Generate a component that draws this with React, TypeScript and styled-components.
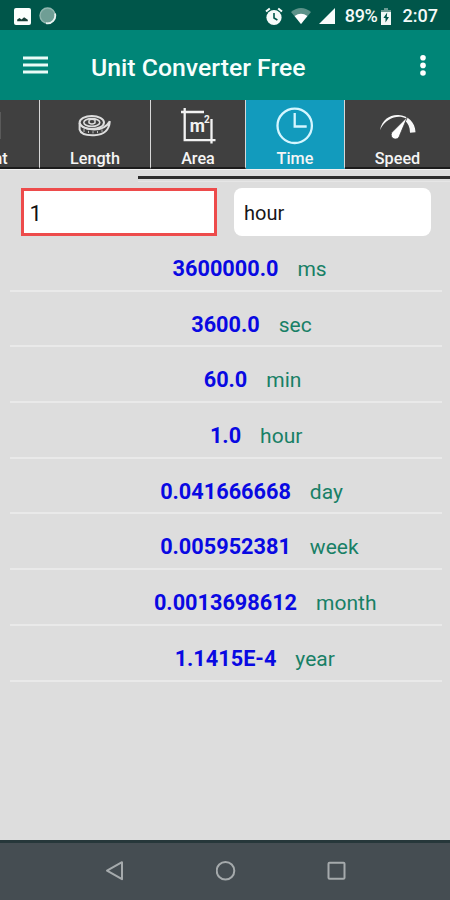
import React from "react";
import styled, { createGlobalStyle } from "styled-components";

const Global = createGlobalStyle`
  * { box-sizing: border-box; }
  body { margin: 0; background: #dddddd; font-family: Roboto, "Liberation Sans", sans-serif; }
`;

const Screen = styled.div`
  width: 450px;
  height: 900px;
  display: flex;
  flex-direction: column;
  overflow: hidden;
  background: #dddddd;
`;

const StatusBar = styled.header`
  height: 30px;
  flex: none;
  display: flex;
  align-items: center;
  padding: 2px 12px 0 14px;
  background: #00564a;
  color: #f4faf8;
  font-size: 18px;
  font-weight: 500;
  line-height: 28px;
  svg { display: block; flex: none; }
`;

const StatusGroup = styled.div<{ $push?: boolean }>`
  display: flex;
  align-items: center;
  gap: 8px;
  margin-left: ${(p) => (p.$push ? "auto" : "0")};
`;

const Battery = styled.span`
  display: flex;
  align-items: center;
  gap: 3px;
  margin: 0 4px 0 2px;
  letter-spacing: -0.3px;
`;

const AppBar = styled.div`
  height: 70px;
  flex: none;
  display: flex;
  align-items: center;
  padding: 0 24px 0 23px;
  background: #008577;
  svg { display: block; }
`;

const Title = styled.h1`
  margin: 5px auto 0 43px;
  font-size: 24.8px;
  font-weight: 500;
  line-height: 32px;
  color: #f7fffd;
  white-space: nowrap;
`;

const Tabs = styled.nav`
  height: 70px;
  flex: none;
  display: grid;
  grid-template-columns: 40px 111px 95px 99px 105px;
  border-bottom: 1px solid #f0f0f0;
`;

const Tab = styled.div<{ $active?: boolean }>`
  display: flex;
  flex-direction: column;
  align-items: center;
  justify-content: flex-end;
  overflow: hidden;
  background: ${(p) => (p.$active ? "#129bbd" : "#404040")};
  border-right: 1px solid #d8d8d8;
  border-bottom: 2px solid ${(p) => (p.$active ? "#129bbd" : "#1c1c1c")};
  color: #f5f5f5;
  &:last-child { border-right: 0; }
  svg { display: block; flex: none; }
`;

const TabLabel = styled.span<{ $clipped?: boolean }>`
  font-size: 16.2px;
  font-weight: 500;
  line-height: 20px;
  margin-bottom: -2px;
  padding-top: 2px;
  margin-left: ${(p) => (p.$clipped ? "-74px" : "0")};
`;

const ScrollTrack = styled.div`
  height: 18px;
  flex: none;
  padding: 6px 0 0 138px;
`;

const ScrollThumb = styled.div`
  height: 6px;
  border-top: 3px solid #2d2d2d;
  border-bottom: 1px solid #e6e6e6;
`;

const Fields = styled.div`
  flex: none;
  display: grid;
  grid-template-columns: 196px 197px;
  gap: 17.5px;
  height: 48px;
  padding-left: 20.5px;
`;

const AmountInput = styled.input`
  width: 100%;
  height: 48px;
  border: 3px solid #ed4b4b;
  border-radius: 0;
  outline: 0;
  padding: 2px 6px 0;
  background: #ffffff;
  color: #111111;
  font: 400 22px/40px Roboto, sans-serif;
`;

const UnitSelect = styled.div`
  border-radius: 8px;
  background: #ffffff;
  padding: 2px 10px 0;
  color: #171717;
  font-size: 20px;
  line-height: 46px;
`;

const Results = styled.main`
  flex: 1;
  padding: 0 8px 0 10px;
`;

const ResultRow = styled.div`
  height: 55.7px;
  display: grid;
  grid-template-columns: 1fr auto 1fr;
  align-items: center;
  column-gap: 19px;
  padding: 12px 1px 0 0;
  border-bottom: 2px solid #e9e9e9;
`;

const Value = styled.span`
  grid-column: 2;
  font-size: 21.7px;
  font-weight: 700;
  line-height: 30px;
  color: #0909e2;
`;

const Unit = styled.span`
  font-size: 21px;
  line-height: 30px;
  color: #188066;
`;

const NavBar = styled.footer`
  height: 60px;
  flex: none;
  display: flex;
  align-items: center;
  justify-content: space-between;
  padding: 0 103px 2px 104px;
  border-top: 3px solid #26373a;
  background: #454d52;
  svg { display: block; }
`;

const results = [
  ["3600000.0", "ms"],
  ["3600.0", "sec"],
  ["60.0", "min"],
  ["1.0", "hour"],
  ["0.041666668", "day"],
  ["0.005952381", "week"],
  ["0.0013698612", "month"],
  ["1.1415E-4", "year"],
];

const PictureIcon = () => (
  <svg width="17" height="17" viewBox="0 0 17 17">
    <rect width="17" height="17" rx="2" fill="#fbfffd" />
    <path d="M3.2 13.2V11.6L5.5 10l2 1.4 2.6-2.2 3.7 2.6v1.4Z" fill="#173f37" />
  </svg>
);

const SyncIcon = () => (
  <svg width="18" height="18" viewBox="0 0 18 18">
    <circle cx="8.6" cy="8.6" r="7.6" fill="#6f9e95" stroke="#92b7b0" strokeWidth="1.4" />
    <path d="M16 6.5A7.8 7.8 0 0 1 7 16.2" fill="none" stroke="#e8f3f0" strokeWidth="1.8" />
  </svg>
);

const AlarmIcon = () => (
  <svg width="18" height="19" viewBox="0 0 18 19">
    <circle cx="9" cy="10.5" r="7.6" fill="#f6fbfa" />
    <path d="M1 4.6 4.8 1.4M17 4.6l-3.8-3.2" stroke="#f6fbfa" strokeWidth="2" />
    <path d="M9 6v5l3.4 2" fill="none" stroke="#00564a" strokeWidth="1.6" />
  </svg>
);

const WifiIcon = () => (
  <svg width="20" height="16" viewBox="0 0 20 16">
    <path d="M0 4Q10-4 20 4L10 16Z" fill="#5d9289" />
    <path d="M3.6 8Q10 3.4 16.4 8L10 16Z" fill="#fff" />
  </svg>
);

const SignalIcon = () => (
  <svg width="16" height="16" viewBox="0 0 16 16">
    <path d="M0 16 16 0v16Z" fill="#f8fcfb" />
  </svg>
);

const BatteryIcon = () => (
  <svg width="10" height="17" viewBox="0 0 10 17">
    <path d="M3 0h4v2h3v4H0V2h3Z" fill="#6c9b93" />
    <path d="M0 4h10v13H0Z" fill="#f2f8f6" />
    <path d="M6.2 4.5 2.4 10h2.1v4.5L8 9H5.8Z" fill="#00564a" />
  </svg>
);

const MenuIcon = () => (
  <svg width="25" height="18" viewBox="0 0 25 18">
    <path d="M0 2h25M0 9h25M0 16h25" stroke="#e9fbf7" strokeWidth="3" />
  </svg>
);

const MoreIcon = () => (
  <svg width="6" height="22" viewBox="0 0 6 22">
    <circle cx="3" cy="3.8" r="2.8" fill="#fff" />
    <circle cx="3" cy="11.4" r="2.8" fill="#fff" />
    <circle cx="3" cy="19" r="2.8" fill="#fff" />
  </svg>
);

const TapeIcon = () => (
  <svg width="34" height="36" viewBox="0 0 34 36" fill="none" stroke="#dedede">
    <ellipse cx="13.8" cy="11.5" rx="12.2" ry="6.6" strokeWidth="2" />
    <ellipse cx="13.8" cy="11.5" rx="8" ry="3.9" strokeWidth="1.6" />
    <path d="M11 9.2v2.6q3 2.2 6 0V9.2q-3-2-6 0" strokeWidth="1.5" />
    <path d="M1.6 12v6.5c1 4.2 7.5 6 14.6 5.7 8-.4 15-4 15.6-14-3.2 5.8-8.9 8.4-16.2 8.2-7-.1-12.6-2.4-14-6.4" strokeWidth="2" />
    <path d="M6 18v3M10.5 19.8v2.2M15 20.2v2.2M19.5 20v2.2M24 18.5v2.4" strokeWidth=".8" />
  </svg>
);

const AreaIcon = () => (
  <svg width="36" height="40" viewBox="0 0 36 40" fill="none" stroke="#f2f2f2">
    <path d="M4.7 1v32.2h30.8M1 5h23M31.5 12v24.5" strokeWidth="2.3" />
    <text x="9.8" y="25" fontFamily="Roboto, sans-serif" fontSize="17.5" fontWeight="700" fill="#f2f2f2" stroke="none">
      m<tspan dx="-1" dy="-9" fontSize="10" fontWeight="700">2</tspan>
    </text>
  </svg>
);

const ClockIcon = () => (
  <svg width="38" height="41" viewBox="0 0 38 41" fill="none" stroke="#d5f6ff" strokeWidth="2.3">
    <circle cx="18.7" cy="19.8" r="17.2" />
    <path d="M18.7 7V20.5h12" />
  </svg>
);

const SpeedIcon = () => (
  <svg width="38" height="37" viewBox="0 0 38 37">
    <path d="M1 20C3 9.5 11 4.4 19.5 5 29 5.6 36 12 36.5 22.2L31 22.8c0-5.6-2-9.6-5.2-12.2l1.2-2.2C19 4.5 7 7.8 1 20Z" fill="#f7f7f7" />
    <path d="M28.5 6.8 20.7 25.3a4.3 4.3 0 1 1-6.5-4.2Z" fill="#fff" stroke="#404040" strokeWidth=".8" />
  </svg>
);

const ClippedIcon = () => (
  <svg width="39" height="40" viewBox="0 0 39 40">
    <path d="M0 5h1v27H0Z" fill="#5a5a5a" />
  </svg>
);

const BackIcon = () => (
  <svg width="20" height="22" viewBox="0 0 20 22">
    <path d="M18 2.2v17L3 10.7Z" fill="none" stroke="#a5aaac" strokeWidth="2" strokeLinejoin="round" />
  </svg>
);

const HomeIcon = () => (
  <svg width="20" height="22" viewBox="0 0 20 22">
    <circle cx="9.5" cy="10.7" r="8.8" fill="none" stroke="#a5aaac" strokeWidth="2" />
  </svg>
);

const RecentIcon = () => (
  <svg width="20" height="22" viewBox="0 0 20 22">
    <rect x="1.5" y="2.7" width="16" height="16" rx="1" fill="none" stroke="#a5aaac" strokeWidth="2" />
  </svg>
);

export default function App() {
  return (
    <>
      <Global />
      <Screen>
        <StatusBar>
          <StatusGroup><PictureIcon /><SyncIcon /></StatusGroup>
          <StatusGroup $push>
            <AlarmIcon /><WifiIcon /><SignalIcon />
            <Battery>89%<BatteryIcon /></Battery>
            <span>2:07</span>
          </StatusGroup>
        </StatusBar>
        <AppBar><MenuIcon /><Title>Unit Converter Free</Title><MoreIcon /></AppBar>
        <Tabs>
          <Tab><ClippedIcon /><TabLabel $clipped>Weight</TabLabel></Tab>
          <Tab><TapeIcon /><TabLabel>Length</TabLabel></Tab>
          <Tab><AreaIcon /><TabLabel>Area</TabLabel></Tab>
          <Tab $active><ClockIcon /><TabLabel>Time</TabLabel></Tab>
          <Tab><SpeedIcon /><TabLabel>Speed</TabLabel></Tab>
        </Tabs>
        <ScrollTrack><ScrollThumb /></ScrollTrack>
        <Fields>
          <AmountInput defaultValue="1" />
          <UnitSelect>hour</UnitSelect>
        </Fields>
        <Results>
          {results.map(([value, unit]) => (
            <ResultRow key={unit}><Value>{value}</Value><Unit>{unit}</Unit></ResultRow>
          ))}
        </Results>
        <NavBar><BackIcon /><HomeIcon /><RecentIcon /></NavBar>
      </Screen>
    </>
  );
}
